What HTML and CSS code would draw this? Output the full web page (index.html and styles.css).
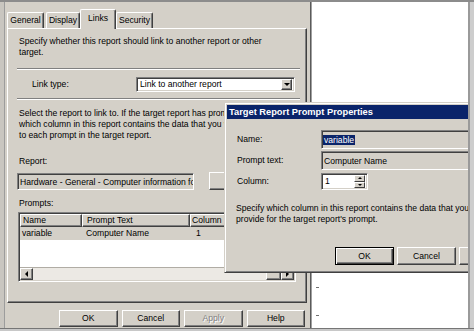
FILE: index.html
```html
<!DOCTYPE html>
<html>
<head>
<meta charset="utf-8">
<title>Links</title>
<link rel="stylesheet" href="styles.css">
</head>
<body>
<div class="screen">
  <div class="top">
    <div class="desk">
      <div class="main">
        <div class="tabs">
          <div class="tab t-general">General</div>
          <div class="tab t-display">Display</div>
          <div class="tab t-links active">Links</div>
          <div class="tab t-security">Security</div>
        </div>
        <div class="panel">
          <p class="txt p1">Specify whether this report should link to another report or other<br>target.</p>
          <div class="groove g1"></div>
          <div class="linktype">
            <span class="lt-label">Link type:</span>
            <div class="combo"><span class="combo-text">Link to another report</span><span class="ddbtn"><span class="tri-down"></span></span></div>
          </div>
          <div class="groove g2"></div>
          <p class="txt p2">Select the report to link to. If the target report has prompts, select<br>which column in this report contains the data that you want to provide<br>to each prompt in the target report.</p>
          <div class="txt lbl-report">Report:</div>
          <div class="report-row">
            <div class="field report-field">Hardware - General - Computer information for a specific computer</div>
            <div class="btn browse"></div>
          </div>
          <div class="txt lbl-prompts">Prompts:</div>
          <div class="list">
            <div class="lhead">
              <div class="hc c1">Name</div><div class="hc c2">Prompt Text</div><div class="hc c3">Column</div><div class="hc c4"></div>
            </div>
            <div class="lrow">
              <div class="rc c1">variable</div><div class="rc c2">Computer Name</div><div class="rc c3 r-col">1</div>
            </div>
            <div class="lfill"></div>
            <div class="hscroll">
              <div class="sbtn"><span class="tri-left"></span></div>
              <div class="track"></div>
              <div class="thumb"></div>
              <div class="sbtn"><span class="tri-right"></span></div>
            </div>
          </div>
        </div>
        <div class="buttons">
          <div class="btn mbtn">OK</div>
          <div class="btn mbtn">Cancel</div>
          <div class="btn mbtn disabled">Apply</div>
          <div class="btn mbtn">Help</div>
        </div>
      </div>
      <div class="white"><span class="tick tk1"></span><span class="tick tk2"></span></div>

      <div class="dlg">
        <div class="titlebar">Target Report Prompt Properties</div>
        <div class="dbody">
          <div class="frow r-name">
            <span class="flabel">Name:</span>
            <div class="field dfield"><span class="sel">variable</span></div>
          </div>
          <div class="frow r-prompt">
            <span class="flabel">Prompt text:</span>
            <div class="field dfield">Computer Name</div>
          </div>
          <div class="frow r-column">
            <span class="flabel">Column:</span>
            <div class="field spin"><span class="spin-val">1</span><span class="spin-btns"><span class="sb"><span class="tri-up-s"></span></span><span class="sb"><span class="tri-down-s"></span></span></span></div>
          </div>
          <p class="txt dpara">Specify which column in this report contains the data that you want to<br>provide for the target report's prompt.</p>
          <div class="dbuttons">
            <div class="btn dbtn default">OK</div>
            <div class="btn dbtn">Cancel</div>
            <div class="btn dbtn"></div>
          </div>
        </div>
      </div>
    </div>
    <div class="strip"></div>
  </div>
  <div class="bottom"></div>
</div>
</body>
</html>
```

FILE: styles.css
```css
* { box-sizing: border-box; }
html, body { margin: 0; padding: 0; }
body {
  width: 474px;
  height: 331px;
  overflow: hidden;
  background: #c8c8c8;
  font-family: "Liberation Sans", Arial, sans-serif;
  font-size: 8.6px;
  color: #000;
}
.screen {
  width: 474px;
  height: 331px;
  display: flex;
  flex-direction: column;
  background: #8c8c8c;
  padding-top: 2px;
}
.top { display: flex; height: 326px; }
.desk {
  position: relative;
  width: 468px;
  height: 326px;
  display: flex;
  overflow: hidden;
}
.strip {
  width: 6px;
  border-left: 2px solid #9a9a9a;
  background: #cdcdcd;
}
.bottom {
  height: 3px;
  border-top: 1px solid #767676;
  background: #c8c8c8;
}

/* main property sheet */
.main {
  width: 311px;
  flex: none;
  background: #d4d0c8;
  padding: 7px 0 0 7px;
  border-right: 1px solid #5a5a5a;
  box-shadow: inset 4px 0 0 #c9c6c0, inset 5px 0 0 #9c9c9c;
  display: flex;
  flex-direction: column;
}
.tabs {
  display: flex;
  align-items: flex-end;
  height: 19px;
  position: relative;
  z-index: 1;
}
.tab {
  flex: none;
  height: 16px;
  line-height: 14px;
  text-align: center;
  background: #d4d0c8;
  border-top: 1px solid #fff;
  border-left: 1px solid #fff;
  border-right: 1px solid #404040;
  box-shadow: inset -1px 0 0 #808080;
  border-radius: 2px 2px 0 0;
}
.t-general { width: 37px; margin-right: 2px; }
.t-display { width: 34px; }
.t-links { width: 36px; }
.t-security { width: 37px; }
.tab.active {
  height: 20px;
  line-height: 16px;
  margin-bottom: -1px;
}
.panel {
  width: 300px;
  height: 275px;
  border-top: 1px solid #fff;
  border-left: 1px solid #fff;
  border-right: 1px solid #404040;
  border-bottom: 1px solid #404040;
  box-shadow: inset -1px -1px 0 #808080;
  padding: 0 6px 0 9px;
  overflow: hidden;
  display: flex;
  flex-direction: column;
}
.txt {
  margin: 0;
  line-height: 11px;
  white-space: nowrap;
}
.p1 { margin: 7px 0 0 2px; }
.groove {
  height: 2px;
  border-top: 1px solid #808080;
  border-bottom: 1px solid #fff;
  flex: none;
}
.g1 { margin-top: 10px; }
.g2 { margin-top: 6px; }
.linktype {
  display: flex;
  align-items: center;
  height: 15px;
  margin-top: 7px;
  flex: none;
}
.lt-label { width: 119px; flex: none; padding-left: 15px; line-height: 11px; }
.combo {
  width: 159px;
  flex: none;
  height: 15px;
  background: #fff;
  border: 1px solid;
  border-color: #808080 #fff #fff #808080;
  box-shadow: inset 1px 1px 0 #404040, inset -1px -1px 0 #d4d0c8;
  display: flex;
  align-items: center;
  padding: 2px 2px 2px 3px;
}
.combo-text { flex: 1; line-height: 11px; }
.ddbtn {
  width: 11px;
  height: 11px;
  background: #d4d0c8;
  border: 1px solid;
  border-color: #fff #404040 #404040 #fff;
  box-shadow: inset -1px -1px 0 #808080;
  display: flex;
  align-items: center;
  justify-content: center;
}
.tri-down {
  width: 0; height: 0;
  border-left: 3px solid transparent;
  border-right: 3px solid transparent;
  border-top: 3px solid #000;
}
.p2 { margin: 8px 0 0 2px; }
.lbl-report { margin: 15px 0 0 2px; }
.report-row {
  display: flex;
  margin-top: 6px;
  height: 17px;
  flex: none;
}
.field {
  flex: none;
  border: 1px solid;
  border-color: #808080 #fff #fff #808080;
  box-shadow: inset 1px 1px 0 #404040, inset -1px -1px 0 #d4d0c8;
  white-space: nowrap;
  overflow: hidden;
}
.report-field {
  width: 177px;
  height: 17px;
  background: #d4d0c8;
  padding: 2px 0 0 2px;
  line-height: 12px;
}
.btn {
  flex: none;
  background: #d4d0c8;
  border: 1px solid;
  border-color: #fff #404040 #404040 #fff;
  box-shadow: inset -1px -1px 0 #808080;
  text-align: center;
  white-space: nowrap;
}
.browse {
  width: 44px;
  height: 18px;
  margin-left: 15px;
  margin-top: -1px;
  line-height: 14px;
}
.lbl-prompts { margin: 8px 0 0 2px; }
.list {
  width: 278px;
  height: 70px;
  margin: 3px 0 0 1px;
  flex: none;
  background: #fff;
  border: 1px solid;
  border-color: #808080 #fff #fff #808080;
  box-shadow: inset 1px 1px 0 #404040, inset -1px -1px 0 #d4d0c8;
  padding: 1px;
  display: flex;
  flex-direction: column;
  overflow: hidden;
}
.lhead { display: flex; height: 13px; flex: none; }
.hc {
  flex: none;
  height: 13px;
  line-height: 11px;
  background: #d4d0c8;
  border: 1px solid;
  border-color: #fff #404040 #404040 #fff;
  box-shadow: inset -1px -1px 0 #808080;
  white-space: nowrap;
}
.lrow { display: flex; height: 13px; background: #d4d0c8; flex: none; }
.rc { flex: none; line-height: 13px; white-space: nowrap; }
.c1 { width: 62px; padding-left: 2px; }
.c2 { width: 108px; padding-left: 4px; }
.c3 { width: 60px; padding-left: 1px; }
.hc.c4 { flex: 1; }
.r-col { padding-left: 6px; }
.lfill { flex: 1; }
.hscroll { display: flex; height: 13px; flex: none; background: #ece9e4; border-top: 1px solid #b0aca4; }
.sbtn {
  flex: none;
  width: 13px;
  height: 12px;
  background: #d4d0c8;
  border: 1px solid;
  border-color: #fff #404040 #404040 #fff;
  box-shadow: inset -1px -1px 0 #808080;
  display: flex;
  align-items: center;
  justify-content: center;
}
.track { flex: 1; }
.thumb {
  flex: none;
  width: 15px;
  height: 12px;
  background: #d4d0c8;
  border: 1px solid;
  border-color: #fff #404040 #404040 #fff;
  box-shadow: inset -1px -1px 0 #808080;
}
.tri-left {
  width: 0; height: 0;
  border-top: 3px solid transparent;
  border-bottom: 3px solid transparent;
  border-right: 3px solid #000;
}
.tri-right {
  width: 0; height: 0;
  border-top: 3px solid transparent;
  border-bottom: 3px solid transparent;
  border-left: 3px solid #000;
}
.buttons {
  display: flex;
  gap: 4px;
  margin: 7px 0 0 52px;
}
.mbtn {
  width: 58.5px;
  height: 17px;
  line-height: 15px;
}
.disabled { color: #808080; text-shadow: 1px 1px 0 #fff; }

/* white area on the right */
.white {
  flex: 1;
  position: relative;
  background: #fff;
  border-left: 1px solid #a0a0a0;
}
.tick {
  position: absolute;
  left: 4px;
  width: 3px;
  height: 1px;
  background: #707070;
}
.tk1 { top: 285px; }
.tk2 { top: 313px; }

/* overlay dialog */
.dlg {
  position: absolute;
  left: 224px;
  top: 100px;
  width: 262px;
  height: 171px;
  background: #d4d0c8;
  border: 1px solid;
  border-color: #d4d0c8 #404040 #404040 #d4d0c8;
  box-shadow: inset 1px 1px 0 #fff, inset -1px -1px 0 #808080;
  padding: 2px;
  z-index: 2;
  overflow: hidden;
}
.titlebar {
  height: 14px;
  background: #0a246a;
  color: #fff;
  font-weight: bold;
  font-size: 9.3px;
  line-height: 14px;
  padding-left: 2px;
  white-space: nowrap;
}
.dbody { padding-left: 10px; }
.frow { display: flex; align-items: center; }
.r-name { margin-top: 11px; height: 19px; }
.r-prompt { margin-top: 2px; height: 19px; }
.r-column { margin-top: 3px; height: 17px; }
.flabel { width: 84px; flex: none; line-height: 11px; white-space: nowrap; }
.dfield {
  width: 170px;
  height: 19px;
  background: #d4d0c8;
  padding: 3px 0 0 1px;
  line-height: 12px;
}
.r-prompt .dfield { padding-left: 2px; }
.sel { background: #0a246a; color: #fff; padding: 0 1px; }
.spin {
  width: 47px;
  height: 17px;
  background: #fff;
  display: flex;
  align-items: center;
  padding: 2px 2px 2px 3px;
}
.spin-val { flex: 1; line-height: 11px; }
.spin-btns { display: flex; flex-direction: column; width: 11px; height: 13px; }
.sb {
  height: 6.5px;
  background: #d4d0c8;
  border: 1px solid;
  border-color: #fff #404040 #404040 #fff;
  display: flex;
  align-items: center;
  justify-content: center;
}
.tri-up-s {
  width: 0; height: 0;
  border-left: 2px solid transparent;
  border-right: 2px solid transparent;
  border-bottom: 2px solid #000;
}
.tri-down-s {
  width: 0; height: 0;
  border-left: 2px solid transparent;
  border-right: 2px solid transparent;
  border-top: 2px solid #000;
}
.dpara { margin: 13px 0 0 -1px; }
.dbuttons {
  display: flex;
  gap: 3px;
  margin: 22px 0 0 98px;
}
.dbtn {
  width: 59px;
  height: 18px;
  line-height: 16px;
}
.dbtn.default {
  border: 1px solid #000;
  box-shadow: inset 1px 1px 0 #fff, inset -1px -1px 0 #404040, inset -2px -2px 0 #808080;
}
```
